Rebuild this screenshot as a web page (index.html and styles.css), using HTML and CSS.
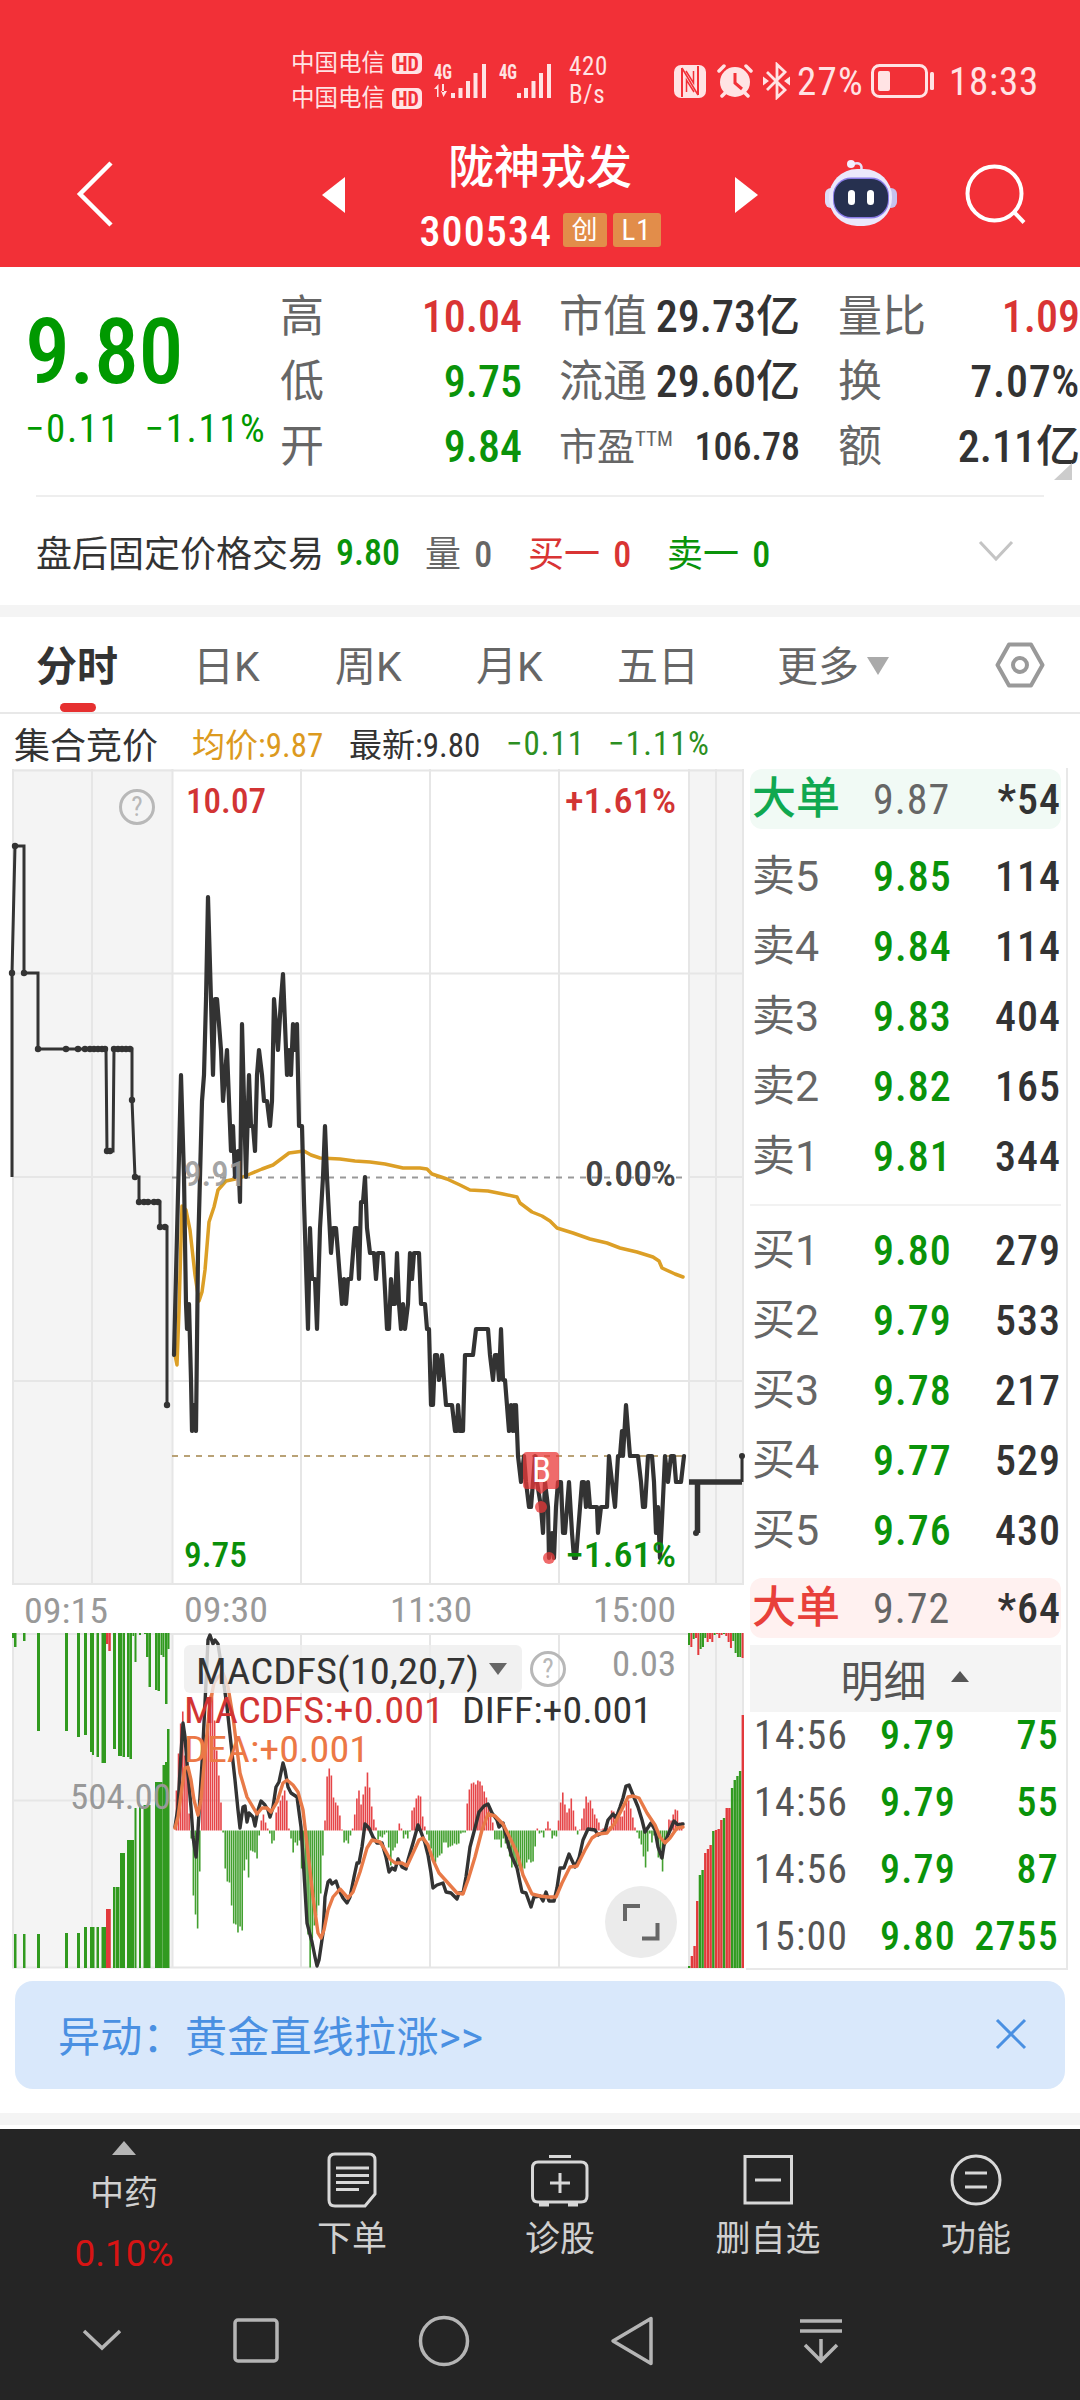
FILE: index.html
```
<!DOCTYPE html>
<html lang="zh-CN">
<head>
    <meta charset="UTF-8">
    <meta name="viewport" content="width=device-width, initial-scale=1.0">
    <title>陇神戎发 300534</title>
    <link rel="stylesheet" href="styles.css">
</head>
<body>
    <header class="header">
        <div class="status">
            <div class="carriers">
                <div class="carrier">中国电信<span class="hd">HD</span></div>
                <div class="carrier">中国电信<span class="hd">HD</span></div>
            </div>
            <svg class="signals" width="120" height="40" viewBox="0 -6 120 40">
                <g fill="#ffe3e4">
                    <text x="0" y="15" class="g4" textLength="18" lengthAdjust="spacingAndGlyphs">4G</text>
                    <path d="M3 33V25H0L4.500 20V33zM8 20V28H10V20zM7 27h6l-3.500 6z"/>
                    <path d="M17 29h4v5h-4zM24.500 24h4v10h-4zM32 17h4v17h-4zM39.500 9h4v25h-4zM48 0h4v34h-4z"/>
                    <text x="65" y="15" class="g4" textLength="18" lengthAdjust="spacingAndGlyphs">4G</text>
                    <path d="M83 29h4v5h-4zM90 24h4v10h-4zM97.500 17h4v17h-4zM105 9h4v25h-4zM113 0h4v34h-4z"/>
                </g>
            </svg>
            <div class="speed"><span>420</span><span>B/s</span></div>
            <svg class="nfc" width="32" height="33" viewBox="0 0 32 33">
                <rect x="0" y="0" width="32" height="33" rx="7" fill="#ffe3e4"/>
                <path d="M8 3V32M24 1V30" fill="none" stroke="#f23037" stroke-width="2"/>
                <path d="M8 3L24 30M12.500 27V15L20 27M12 6L19.500 18V6" fill="none" stroke="#f23037" stroke-width="1.500"/>
            </svg>
            <svg class="alarm" width="36" height="34" viewBox="0 0 36 34">
                <circle cx="18" cy="18" r="15" fill="#ffe3e4"/>
                <path d="M2 7L7 2M34 7L29 2M8 29L5 32M28 29L31 32" stroke="#ffe3e4" stroke-width="3.500" stroke-linecap="round"/>
                <path d="M18 9V19L25 25" fill="none" stroke="#f23037" stroke-width="3"/>
            </svg>
            <svg class="bt" width="27" height="38" viewBox="0 0 27 38">
                <path d="M4 10L22 28L14 35.500V2.500L22 10L4 28" fill="none" stroke="#ffe3e4" stroke-width="2.800"/>
                <path d="M0 14.500L6 19L0 23.500zM27 14.500L21 19L27 23.500z" fill="#ffe3e4"/>
            </svg>
            <span class="percent">27%</span>
            <svg class="battery" width="63" height="34" viewBox="0 0 63 34">
                <rect x="1.500" y="1.500" width="54" height="31" rx="7" fill="none" stroke="#ffe3e4" stroke-width="3"/>
                <rect x="7" y="7" width="12" height="20" rx="2" fill="#ffe3e4"/>
                <rect x="59" y="8" width="4" height="18" rx="1.500" fill="#ffe3e4"/>
            </svg>
            <span class="clock">18:33</span>
        </div>
        <div class="titlebar">
            <svg class="back" width="40" height="68" viewBox="0 0 40 68"><path d="M37 3L6 34L37 65" fill="none" stroke="#fff" stroke-width="4.500"/></svg>
            <svg class="prev" width="23" height="36" viewBox="0 0 23 36"><path d="M23 0V36L0 18z" fill="#fff"/></svg>
            <div class="stock">
                <div class="stock-name">陇神戎发</div>
                <div class="stock-code"><span class="code">300534</span><span class="tag">创</span><span class="tag l1">L1</span></div>
            </div>
            <svg class="next" width="23" height="36" viewBox="0 0 23 36"><path d="M0 0V36L23 18z" fill="#fff"/></svg>
            <svg class="robot" width="72" height="68" viewBox="0 0 72 68">
                <path d="M36 12C38 5 34 3 28 5" fill="none" stroke="#e6e2fa" stroke-width="2.500"/>
                <circle cx="26" cy="5" r="4" fill="#f4efff"/>
                <rect x="0" y="29" width="12" height="20" rx="6" fill="#dedcf6"/>
                <rect x="60" y="29" width="12" height="20" rx="6" fill="#c5c1ee"/>
                <rect x="4" y="10" width="63" height="57" rx="28" fill="#ebe8fb"/>
                <rect x="8" y="18.500" width="56" height="41" rx="18" fill="#8a7ce8"/>
                <rect x="9" y="20" width="54" height="38" rx="17" fill="#26304f"/>
                <rect x="23" y="31" width="7" height="15" rx="3.500" fill="#fff"/>
                <rect x="42" y="31" width="7" height="15" rx="3.500" fill="#fff"/>
            </svg>
            <svg class="search" width="62" height="62" viewBox="0 0 62 62"><circle cx="29.500" cy="29.500" r="27" fill="none" stroke="#fff" stroke-width="4"/><path d="M49 48L59 58.500" stroke="#fff" stroke-width="4"/></svg>
        </div>
    </header>

    <section class="quote">
        <div class="price-block">
            <div class="price">9.80</div>
            <div class="change"><span>−0.11</span><span>−1.11%</span></div>
        </div>
        <div class="facts c1">
            <div class="fact"><span>高</span><b class="up">10.04</b></div>
            <div class="fact"><span>低</span><b class="down">9.75</b></div>
            <div class="fact"><span>开</span><b class="down">9.84</b></div>
        </div>
        <div class="facts c2">
            <div class="fact"><span>市值</span><b>29.73亿</b></div>
            <div class="fact"><span>流通</span><b>29.60亿</b></div>
            <div class="fact small"><span>市盈<sup>TTM</sup></span><b>106.78</b></div>
        </div>
        <div class="facts c3">
            <div class="fact"><span>量比</span><b class="up">1.09</b></div>
            <div class="fact"><span>换</span><b class="turnover">7.07%</b></div>
            <div class="fact"><span>额</span><b>2.11亿</b></div>
        </div>
        <i class="corner"></i>
    </section>
    <section class="after-hours">
        <span class="ah-title">盘后固定价格交易</span>
        <span class="ah-price down">9.80</span>
        <span class="ah-vol">量 <b>0</b></span>
        <span class="ah-buy up">买一 <b>0</b></span>
        <span class="ah-sell down">卖一 <b>0</b></span>
        <svg class="ah-more" width="36" height="22" viewBox="0 0 36 22"><path d="M2 2L18 19L34 2" fill="none" stroke="#c4c4c4" stroke-width="3"/></svg>
    </section>

    <nav class="tabs">
        <span class="tab active">分时</span>
        <span class="tab">日K</span>
        <span class="tab">周K</span>
        <span class="tab">月K</span>
        <span class="tab">五日</span>
        <span class="tab">更多<i class="caret"></i></span>
        <svg class="gear" width="50" height="46" viewBox="0 0 50 46">
            <path d="M14 2.500H36L47.500 23L36 43.500H14L2.500 23z" fill="none" stroke="#999" stroke-width="4" stroke-linejoin="round"/>
            <circle cx="25" cy="23" r="7" fill="none" stroke="#999" stroke-width="4"/>
        </svg>
    </nav>
    <div class="summary">
        <span class="sm-title">集合竞价</span>
        <span class="sm-avg">均价:9.87</span>
        <span class="sm-last">最新:9.80</span>
        <span class="sm-chg">−0.11</span>
        <span class="sm-pct">−1.11%</span>
    </div>

    <main class="market">
        <svg class="chart" width="746" height="1202" viewBox="0 768 746 1202">
            <g class="panels">
                <path d="M12 769H172V1584H12zM689 769H744V1584H689zM12 1633H172V1968H12zM689 1633H744V1968H689z"/>
            </g>
            <g class="grid">
                <path d="M12 770.500H744M12 973.500H744M12 1381H744M12 1584H744M12 1177H172M689 1177H744"/>
                <path d="M13 769V1585M92 769V1585M172.500 769V1585M301 769V1585M430 769V1585M559 769V1585M689 769V1585M716 769V1585M743 769V1585"/>
                <path d="M12 1634H744M12 1800.500H744M12 1967.500H744"/>
                <path d="M13 1633V1968M92 1633V1968M172.500 1633V1968M301 1633V1968M430 1633V1968M559 1633V1968M689 1633V1968M716 1633V1968M743 1633V1968"/>
            </g>
            <path d="M172 1177.500H684" stroke="#999" stroke-width="2" stroke-dasharray="6 6"/>
            <path d="M172 1456H684" stroke="#b9a276" stroke-width="2" stroke-dasharray="6 6"/>

            <!-- opening auction -->
            <path class="auction" d="M12 1177V973L15 846H24V973H38V1049H106L107 1151H113L114 1049H132V1100L135 1177H139V1202H160V1227H167V1405"/>
            <g id="dots" fill="#333"></g>
            <!-- average price -->
            <polyline class="avg" points="174,1350 177,1365 179,1310 182,1206 186,1210 190,1230 195,1275 199,1301 202,1292 205,1270 209,1222 214,1207 218,1190 226,1181 240,1178 250,1174 262,1169 273,1165 281,1159 289,1153 304,1151 311,1155 320,1158 340,1159 355,1161 370,1162 385,1164 403,1168 420,1168 427,1169 432,1174 447,1179 460,1185 470,1190 488,1191 503,1194 517,1197 520,1203 532,1212 542,1216 550,1221 557,1228 573,1233 590,1239 607,1243 620,1248 637,1252 653,1257 659,1261 662,1268 675,1274 683,1277"/>
            <polyline class="last" points="174,1355 181,1075 184,1177 186,1304 187,1329 189,1304 191,1380 192,1431 194,1405 196,1431 198,1253 200,1177 202,1101 204,1075 206,1000 208,897 211,1000 213,1075 215,999 217,999 219,1024 221,1050 223,1101 225,1075 227,1050 229,1101 231,1151 233,1126 235,1177 238,1151 240,1202 242,1024 244,1101 246,1177 249,1075 251,1126 253,1126 255,1151 257,1075 259,1050 262,1075 264,1101 267,1101 270,1126 272,1101 274,999 276,1024 278,1050 281,999 283,974 285,1024 287,1075 289,1050 291,1075 293,1024 295,1050 297,1024 299,1126 302,1126 304,1202 308,1329 310,1228 312,1279 315,1279 317,1329 320,1228 323,1177 325,1126 327,1177 331,1253 333,1228 336,1228 338,1253 340,1279 342,1304 344,1279 346,1304 348,1279 351,1279 353,1253 355,1228 357,1228 359,1279 361,1202 363,1202 365,1177 367,1228 370,1253 374,1253 376,1279 378,1253 383,1253 385,1290 387,1329 389,1329 391,1279 393,1304 395,1304 397,1253 399,1304 401,1329 403,1304 405,1329 408,1304 410,1253 412,1279 414,1253 419,1253 421,1304 425,1304 427,1329 429,1329 431,1405 433,1405 435,1355 437,1355 439,1380 442,1355 446,1405 452,1405 455,1431 457,1431 458,1405 460,1431 463,1431 465,1355 473,1355 476,1329 488,1329 490,1355 493,1380 495,1355 497,1355 499,1380 501,1329 503,1380 505,1380 509,1431 511,1405 513,1431 514,1405 515,1431 516,1405 518,1456 521,1482 524,1456 526,1482 529,1507 531,1507 533,1482 535,1456 537,1482 541,1507 543,1533 545,1482 548,1507 549,1558 552,1533 554,1558 556,1507 558,1482 561,1482 563,1533 565,1533 569,1482 572,1533 574,1558 576,1558 579,1520 582,1482 584,1482 586,1507 588,1482 590,1507 597,1507 598,1533 601,1507 607,1507 609,1456 612,1482 615,1507 618,1456 620,1456 622,1431 623,1456 626,1405 628,1431 630,1456 638,1456 641,1482 643,1507 645,1507 648,1456 652,1456 654,1482 656,1533 658,1507 660,1558 662,1520 665,1456 668,1482 671,1456 674,1456 676,1482 681,1482 684,1456"/>
            <!-- after-hours auction -->
            <path d="M689 1482H742M697.500 1482V1533" stroke="#333" stroke-width="5.500" fill="none"/>
            <path d="M742 1482V1456" stroke="#333" stroke-width="3"/>
            <circle cx="696" cy="1533" r="3" fill="#333"/><circle cx="742" cy="1456" r="3" fill="#333"/>

            <g fill="#e93a3a" fill-opacity=".75">
                <path d="M527 1452H555Q559 1452 559 1456V1485Q559 1489 555 1489H547L541 1494L535 1489H527Q523 1489 523 1485V1456Q523 1452 527 1452z"/>
                <circle cx="541" cy="1507" r="6"/><circle cx="549" cy="1558" r="6"/>
            </g>
            <text x="532" y="1482" class="t" font-size="31" fill="#fff" textLength="19" lengthAdjust="spacingAndGlyphs">B</text>

            <circle cx="137" cy="807" r="16.500" fill="none" stroke="#b8b8b8" stroke-width="3"/>
            <text x="137" y="816" class="q">?</text>
            <text x="186" y="813" class="t m" fill="#d23434" textLength="80" lengthAdjust="spacingAndGlyphs">10.07</text>
            <text x="565" y="813" class="t m" fill="#d23434" textLength="111" lengthAdjust="spacingAndGlyphs">+1.61%</text>
            <text x="184" y="1186" class="t m" fill="#999" fill-opacity=".9" textLength="62" lengthAdjust="spacingAndGlyphs">9.91</text>
            <text x="585" y="1186" class="t m" fill="#444" textLength="91" lengthAdjust="spacingAndGlyphs">0.00%</text>
            <text x="184" y="1567" class="t m" fill="#0a8f0a" textLength="63" lengthAdjust="spacingAndGlyphs">9.75</text>
            <text x="565" y="1567" class="t m" fill="#0a8f0a" textLength="111" lengthAdjust="spacingAndGlyphs">−1.61%</text>
            <g class="t" fill="#999">
                <text x="24" y="1623" textLength="84" lengthAdjust="spacingAndGlyphs">09:15</text>
                <text x="184" y="1622" textLength="84" lengthAdjust="spacingAndGlyphs">09:30</text>
                <text x="390" y="1622" textLength="82" lengthAdjust="spacingAndGlyphs">11:30</text>
                <text x="593" y="1622" textLength="83" lengthAdjust="spacingAndGlyphs">15:00</text>
            </g>

            <!-- indicator panel -->
            <g id="bars"></g>
            <polyline class="diff" points="175,1827 178,1807 181,1753 183,1723 185,1737 187,1763 191,1807 193,1837 196,1857 198,1830 202,1763 205,1703 208,1640 210,1635 213,1644 215,1640 218,1644 222,1670 227,1707 232,1753 235,1780 238,1810 240,1828 243,1807 245,1806 247,1822 249,1813 253,1817 255,1826 258,1810 261,1801 265,1805 268,1810 270,1817 273,1807 276,1787 279,1782 283,1763 285,1770 288,1787 291,1793 297,1797 301,1827 304,1873 307,1923 312,1942 315,1957 317,1966 319,1960 323,1933 325,1897 328,1882 330,1880 332,1884 336,1881 339,1890 343,1898 347,1903 350,1897 354,1877 357,1863 359,1863 362,1847 365,1824 369,1828 373,1837 377,1843 382,1843 386,1857 389,1872 392,1868 395,1870 398,1859 402,1867 406,1869 408,1860 413,1843 418,1825 421,1832 425,1843 428,1855 431,1873 433,1888 437,1885 443,1883 446,1892 451,1893 457,1899 459,1893 463,1893 466,1877 470,1847 475,1828 479,1812 484,1806 488,1804 492,1813 497,1820 499,1827 503,1823 507,1840 512,1857 517,1868 522,1892 526,1893 531,1907 534,1897 540,1896 543,1901 546,1892 549,1901 554,1901 557,1888 560,1868 564,1868 569,1854 575,1867 579,1858 583,1840 588,1829 595,1830 598,1835 605,1831 608,1820 613,1814 616,1818 620,1807 623,1798 626,1786 629,1785 633,1795 638,1807 642,1820 645,1832 651,1823 655,1830 658,1847 662,1858 664,1845 668,1835 674,1821 678,1825 683,1824"/>
            <polyline class="dea" points="175,1828 178,1817 182,1787 185,1768 188,1767 191,1780 194,1800 198,1815 201,1800 205,1753 210,1703 214,1683 218,1677 223,1673 228,1687 233,1717 240,1773 247,1797 257,1814 262,1808 267,1808 271,1812 277,1802 283,1783 287,1780 293,1785 298,1792 303,1810 308,1853 313,1897 318,1933 321,1938 324,1930 328,1910 333,1897 340,1889 348,1898 353,1892 360,1872 367,1848 372,1840 380,1842 385,1850 390,1859 395,1863 402,1863 407,1866 413,1853 419,1840 423,1838 428,1845 433,1860 439,1873 448,1883 457,1893 463,1894 468,1880 475,1857 482,1830 488,1814 495,1816 503,1824 510,1838 517,1853 523,1875 532,1894 540,1896 548,1897 556,1897 562,1883 570,1867 577,1866 585,1850 592,1838 598,1834 607,1833 615,1823 623,1807 628,1797 633,1796 639,1798 647,1813 655,1825 660,1837 665,1843 670,1838 677,1828 683,1827"/>
            <rect x="184" y="1645" width="338" height="48" rx="6" fill="#eee" fill-opacity=".8"/>
            <text x="196" y="1684" class="t m2" fill="#333" textLength="283" lengthAdjust="spacingAndGlyphs">MACDFS(10,20,7)</text>
            <path d="M489 1663H507L498 1675z" fill="#666"/>
            <circle cx="548" cy="1669" r="16.500" fill="none" stroke="#b8b8b8" stroke-width="3"/>
            <text x="548" y="1678" class="q">?</text>
            <text x="612" y="1676" class="t" fill="#999" textLength="64" lengthAdjust="spacingAndGlyphs">0.03</text>
            <text x="184" y="1723" class="t m2" fill="#d23434" textLength="260" lengthAdjust="spacingAndGlyphs">MACDFS:+0.001</text>
            <text x="462" y="1723" class="t m2" fill="#333" textLength="190" lengthAdjust="spacingAndGlyphs">DIFF:+0.001</text>
            <text x="184" y="1762" class="t m2" fill="#ec7846" textLength="185" lengthAdjust="spacingAndGlyphs">DEA:+0.001</text>
            <text x="70" y="1809" class="t" fill="#999" textLength="101" lengthAdjust="spacingAndGlyphs">504.00</text>
            <circle cx="641" cy="1922" r="36" fill="#ebebeb"/>
            <path d="M625 1921V1906H640M642 1938.500H657.500V1923" fill="none" stroke="#666" stroke-width="4"/>
        </svg>

        <aside class="book">
            <div class="order big sell-big"><span>大单</span><b>9.87</b><em>*54</em></div>
            <div class="orders">
                <div class="order"><span>卖5</span><b>9.85</b><em>114</em></div>
                <div class="order"><span>卖4</span><b>9.84</b><em>114</em></div>
                <div class="order"><span>卖3</span><b>9.83</b><em>404</em></div>
                <div class="order"><span>卖2</span><b>9.82</b><em>165</em></div>
                <div class="order"><span>卖1</span><b>9.81</b><em>344</em></div>
            </div>
            <div class="orders buys">
                <div class="order"><span>买1</span><b>9.80</b><em>279</em></div>
                <div class="order"><span>买2</span><b>9.79</b><em>533</em></div>
                <div class="order"><span>买3</span><b>9.78</b><em>217</em></div>
                <div class="order"><span>买4</span><b>9.77</b><em>529</em></div>
                <div class="order"><span>买5</span><b>9.76</b><em>430</em></div>
            </div>
            <div class="order big buy-big"><span>大单</span><b>9.72</b><em>*64</em></div>
            <div class="detail-head">明细<i></i></div>
            <div class="trades">
                <div class="trade"><span>14:56</span><b>9.79</b><em>75</em></div>
                <div class="trade"><span>14:56</span><b>9.79</b><em>55</em></div>
                <div class="trade"><span>14:56</span><b>9.79</b><em>87</em></div>
                <div class="trade"><span>15:00</span><b>9.80</b><em>2755</em></div>
            </div>
        </aside>
    </main>

    <div class="notice">
        <span>异动：黄金直线拉涨&gt;&gt;</span>
        <svg width="32" height="32" viewBox="0 0 32 32"><path d="M2 2L30 30M30 2L2 30" stroke="#4a90e2" stroke-width="3"/></svg>
    </div>
    <div class="band"></div>

    <footer class="footer">
        <div class="actions">
            <div class="sector"><i></i><span>中药</span><b>0.10%</b></div>
            <div class="action">
                <svg width="60" height="60" viewBox="0 0 60 60"><path d="M13 4H47Q53 4 53 10V44L43 56H13Q7 56 7 50V10Q7 4 13 4zM14 18H47M14 25.500H47M14 32.500H47M14 39.500H37" fill="none" stroke="#d8d8d8" stroke-width="3"/></svg>
                <span>下单</span>
            </div>
            <div class="action">
                <svg width="60" height="60" viewBox="0 0 60 60"><path d="M8 12H51Q57 12 57 18V46Q57 52 51 52H8Q2.500 52 2.500 46V18Q2.500 12 8 12zM19 6.500H41M30 23V43M20 33H40M9 55H19M38 55H48" fill="none" stroke="#d8d8d8" stroke-width="3"/></svg>
                <span>诊股</span>
            </div>
            <div class="action">
                <svg width="60" height="60" viewBox="0 0 60 60"><path d="M7 6.500H53.500V53H7zM17 30H43" fill="none" stroke="#d8d8d8" stroke-width="3"/></svg>
                <span>删自选</span>
            </div>
            <div class="action">
                <svg width="60" height="60" viewBox="0 0 60 60"><circle cx="30" cy="30" r="24" fill="none" stroke="#d8d8d8" stroke-width="3"/><path d="M19 23H41M19 37H41" stroke="#d8d8d8" stroke-width="3"/></svg>
                <span>功能</span>
            </div>
        </div>
        <svg class="sysnav" width="1080" height="60" viewBox="0 0 1080 60">
            <g fill="none" stroke="#b5b5b5" stroke-width="3.500">
                <path d="M84 21L102 38L120 21"/>
                <rect x="235" y="10" width="42" height="41" rx="3"/>
                <circle cx="444" cy="31" r="23.500"/>
                <path d="M651 8.500V53.500L613 31z" stroke-linejoin="round"/>
                <path d="M800 11H842M800 21H842M821 29V50M805 35L821 51L837 35"/>
            </g>
        </svg>
    </footer>

    <script>
        const RED = "#e2393c";
        const GREEN = "#319a1f";

        function add(id, html) {
            document.getElementById(id).innerHTML += html;
        }
        function bar(x, y, w, h, color) {
            return `<rect x="${x}" y="${y}" width="${w}" height="${h}" fill="${color}"/>`;
        }

        // auction match points
        [[12,973],[15,846],[24,973],[38,1049],[66,1049],[78,1049],[85,1049],[90,1049],[94,1049],[98,1049],[102,1049],[105,1049],
         [107,1151],[110,1151],[114,1049],[118,1049],[122,1049],[126,1049],[130,1049],[132,1100],[135,1177],[139,1202],[144,1202],
         [148,1202],[154,1202],[158,1202],[160,1227],[165,1227],[167,1405]]
            .forEach(([x, y]) => add("dots", `<circle cx="${x}" cy="${y}" r="3.2"/>`));

        // MACD histogram, one value per minute
        const macd = [40,77,107,119,75,60,17,-8,-65,-84,-98,-41,40,70,95,115,135,140,110,80,55,28,-2,-38,-51,-52,-75,-93,-94,-102,-96,
            -100,-40,-29,-47,-20,-21,-22,-28,-5,10,16,8,2,-3,-13,-10,18,24,30,35,40,30,2,-8,-22,-12,-15,-10,-38,-52,-73,-104,-137,-108,
            -95,-85,-75,-63,-25,10,54,62,55,33,28,25,15,1,-12,-10,-13,-5,2,16,32,40,26,36,44,58,43,24,11,3,-9,-6,-7,-4,-2,-17,-35,-20,
            -17,-13,7,2,-8,-4,-8,-1,20,23,32,35,34,14,4,-4,-10,-18,-30,-32,-27,-25,-23,-12,-12,-17,-16,-15,-13,-14,-13,-3,-2,-2,27,41,
            47,48,46,50,49,45,39,33,26,19,8,-9,-9,-9,-17,-8,-13,-18,-26,-37,-30,-35,-36,-40,-42,-38,-32,-29,-32,-31,-16,2,-3,-2,-7,2,9,
            2,-8,-5,-6,10,28,38,26,18,22,32,20,4,-4,1,12,22,34,28,30,22,16,12,8,1,2,2,3,4,20,19,16,15,14,14,20,28,30,22,13,3,-2,-8,-14,
            -26,-37,-21,-3,-12,-5,-8,-27,-28,-41,-15,-5,11,10,16,21,20,8,8];
        let out = "";
        macd.forEach((v, i) => {
            const x = (175.6 + i * 2.123).toFixed(2);
            out += v > 0 ? bar(x, 1830.5 - v, 1.6, v, "#e64548") : bar(x, 1830.5, 1.6, -v, "#43a030");
        });

        // opening auction, unmatched volume hangs from the top: x, width, length
        [[12,2,5],[14,2.5,14],[23,2.5,8],[37,3,98],[65,3,98],[77,3,104],[84,3,102],[90,2.5,119],[92,2,122],[96.5,2.5,124],[101.5,4.5,130],
         [113,3,116],[118,4,123],[122.5,2.5,124],[127,2.5,124],[129.5,2.5,126],[132.5,1.5,3],[134.5,2,29],[139,2,2],[144,2,1],
         [146,2.5,24],[148.5,2.5,54],[155,2.5,57],[157.5,2.5,58],[160.5,2,22],[162.5,2,24],[165,2.5,71],[167.5,2,16]]
            .forEach(([x, w, h]) => out += bar(x, 1633, w, h, GREEN));
        out += bar(106, 1633, 2.3, 11, RED) + bar(108.3, 1633, 2.5, 18, RED);
        // matched volume stands on the bottom
        [[14,2.5,34],[23,2.5,34],[37,3,34],[65,3,35],[77,3,35],[84,3,41],[90,4.5,41],[96.5,2.5,41],[101.5,4.5,41],[113,2.5,81],
         [116,3.5,81],[120,5,115],[127,7,128],[134.5,2,160],[139,2,162],[143.5,7,163],[155,7.5,186],[162.5,2.5,203],
         [165,2,206],[167,2.5,239]]
            .forEach(([x, w, h]) => out += bar(x, 1968 - h, w, h, GREEN));
        out += bar(106, 1909, 4.8, 59, RED);

        // closing auction
        const unmatched = [[12,0],[14,1],[6,0],[5,1],[22,1],[16,0],[14,0],[5,0],[9,1],[6,1],[9,1],[2,0],[1,1],[5,1],[2,1],[1,0],[3,1],[9,1],[15,1],[8,0],[20,0],[24,0],[24,0],[25,1]];
        unmatched.forEach(([h, up], i) => out += bar(688 + i * 2.33, 1633, 2, h, up ? RED : GREEN));
        const matched = [[2,0],[12,1],[22,1],[67,1],[93,0],[98,0],[115,1],[119,1],[123,1],[137,0],[138,1],[139,1],[148,1],[150,0],[160,1],[160,1],[180,0],[188,0],[192,0],[197,0],[253,1]];
        matched.forEach(([h, up], i) => out += bar(688 + i * 2.68, 1968 - h, 2.4, h, up ? RED : GREEN));
        add("bars", out);
    </script>
</body>
</html>
```
FILE: styles.css
```
* {
    box-sizing: border-box;
}
body {
    margin: 0;
    width: 1080px;
    height: 2400px;
    overflow: hidden;
    background: #fff;
    color: #333;
    font-family: Roboto, "Noto Sans CJK SC", sans-serif;
    font-stretch: 85%;
}
b, em, i {
    font-style: normal;
    font-weight: 500;
}
.up { color: #d93434; }
.down { color: #0a930a; }

/* header */
.header {
    height: 267px;
    background: #f23037;
    color: #fff;
}
.status {
    display: flex;
    align-items: center;
    height: 112px;
    padding: 50px 0 0 291px;
    color: #ffe3e4;
}
.carriers {
    width: 143px;
}
.carrier {
    display: flex;
    align-items: center;
    gap: 7px;
    height: 35px;
    font-size: 23.5px;
    line-height: 35px;
}
.hd {
    width: 30px;
    height: 21px;
    border-radius: 5px;
    background: #ffe3e4;
    color: #f23037;
    font-size: 20px;
    font-weight: 700;
    line-height: 22px;
    text-align: center;
}
.signals { margin-top: -6px; }
.g4 {
    font-size: 20px;
    font-weight: 700;
}
.speed {
    display: flex;
    flex-direction: column;
    width: 54px;
    margin-left: 15px;
    font-size: 25px;
    line-height: 28px;
    letter-spacing: 0.7px;
}
.nfc { margin-left: 51px; }
.alarm { margin-left: 11px; }
.bt { margin-left: 10px; }
.percent {
    width: 67px;
    margin: 2px 0 0 7px;
    font-size: 39px;
    letter-spacing: 1.2px;
}
.battery { margin-left: 7px; }
.clock {
    margin: 2px 0 0 15px;
    font-size: 39px;
    letter-spacing: 0.8px;
}
.titlebar {
    display: flex;
    align-items: center;
    height: 155px;
    padding-left: 74px;
}
.back { margin-top: 8px; }
.prev { margin: 10px 0 0 208px; }
.stock {
    width: 390px;
    padding-top: 20px;
    text-align: center;
}
.stock-name {
    height: 61px;
    font-size: 46px;
    font-weight: 500;
    line-height: 56px;
}
.stock-code {
    display: flex;
    justify-content: center;
    align-items: center;
    height: 60px;
    gap: 6px;
}
.code {
    width: 137px;
    padding-top: 2px;
    font-size: 42px;
    font-weight: 500;
    letter-spacing: 1.1px;
    text-align: left;
}
.tag {
    width: 44px;
    height: 34px;
    border-radius: 3px;
    background: #e28d4a;
    font-size: 26px;
    line-height: 34px;
}
.l1 {
    width: 48px;
    font-size: 29px;
    letter-spacing: 1px;
}
.next { margin-top: 10px; }
.robot { margin: 6px 0 0 67px; }
.search { margin: 10px 0 0 68px; }

/* quote */
.quote {
    position: relative;
    display: flex;
    height: 228px;
    padding: 18px 0 0 25px;
}
.price-block {
    width: 255px;
    color: #090;
}
.price {
    height: 104px;
    padding-top: 16px;
    font-size: 90px;
    font-weight: 500;
    letter-spacing: -0.5px;
    line-height: 104px;
}
.change {
    display: flex;
    gap: 24px;
    height: 60px;
    font-size: 39px;
    letter-spacing: 1.6px;
    line-height: 80px;
}
.fact {
    display: flex;
    justify-content: space-between;
    height: 65px;
    font-size: 44px;
    line-height: 65px;
    white-space: nowrap;
}
.fact span { color: #666; }
.c1 { width: 242px; }
.c2 { width: 241px; margin-left: 37px; }
.c3 { width: 242px; margin-left: 38px; }
.turnover { letter-spacing: 0.7px; }
.fact.small { font-size: 38px; }
.fact sup {
    font-size: 21px;
    line-height: 0;
}
.corner {
    position: absolute;
    right: 8px;
    bottom: 15px;
    border-left: 18px solid transparent;
    border-bottom: 17px solid #ccc;
}
.after-hours {
    display: flex;
    align-items: center;
    height: 110px;
    margin: 0 36px;
    border-top: 2px solid #eee;
    font-size: 36px;
    white-space: nowrap;
}
.ah-title { width: 300px; }
.ah-price {
    width: 89px;
    padding-top: 4px;
    font-weight: 500;
}
.ah-vol { width: 103px; color: #666; }
.ah-buy { width: 139px; }
.ah-sell { width: 311px; }
.after-hours span { word-spacing: 5px; }

/* tabs */
.tabs {
    display: flex;
    align-items: center;
    height: 109px;
    padding-left: 36px;
    border-top: 12px solid #f4f4f4;
    border-bottom: 2px solid #e8e8e8;
    color: #666;
    font-size: 41px;
    font-stretch: 100%;
}
.tab {
    position: relative;
    width: 141px;
    height: 95px;
    line-height: 101px;
    white-space: nowrap;
}
.tab:nth-child(1) { width: 157px; }
.tab:nth-child(2) { width: 142px; }
.tab:nth-child(6) { width: 218px; margin-left: 19px; }
.active {
    color: #333;
    font-weight: 700;
}
.active::after {
    content: "";
    position: absolute;
    left: 24px;
    bottom: 0;
    width: 36px;
    height: 9px;
    border-radius: 5px;
    background: #e63030;
}
.caret {
    display: inline-block;
    margin: 0 0 6px 8px;
    border: 11px solid transparent;
    border-top: 18px solid #aaa;
    border-bottom: 0;
}
.summary {
    display: flex;
    align-items: center;
    height: 54px;
    padding: 3px 0 0 14px;
    font-size: 33px;
    white-space: nowrap;
}
.sm-title { width: 178px; font-size: 36px; }
.sm-avg { width: 157px; color: #dc9a1e; }
.sm-last { width: 157px; }
.sm-chg {
    width: 102px;
    padding-top: 2px;
    color: #2c8f22;
    letter-spacing: 1px;
}
.sm-pct {
    padding-top: 2px;
    color: #2c8f22;
    letter-spacing: 1.2px;
}

/* charts */
.market {
    display: flex;
    height: 1202px;
}
.chart {
    flex: none;
}
.panels { fill: #f4f4f4; }
.grid {
    fill: none;
    stroke: #e6e6e6;
    stroke-width: 2;
}
.auction {
    fill: none;
    stroke: #333;
    stroke-width: 3;
}
.avg, .last, .diff, .dea {
    fill: none;
    stroke-width: 3.5;
    stroke-linejoin: round;
    stroke-linecap: round;
}
.avg { stroke: #dc9f26; }
.last { stroke: #333; stroke-width: 4.2; }
.diff { stroke: #333; stroke-width: 3.4; }
.dea { stroke: #e87a48; stroke-width: 3.4; }
.t { font-size: 35px; }
.m { font-weight: 500; }
.m2 { font-size: 37px; }
.q {
    font-size: 27px;
    fill: #b8b8b8;
    text-anchor: middle;
}

/* order book */
.book {
    flex: none;
    width: 322px;
    padding: 1px 5px 0 4px;
    border-right: 2px solid #e8e8e8;
    border-bottom: 2px solid #e8e8e8;
}
.order {
    display: flex;
    height: 70px;
    padding-left: 2px;
    font-size: 42px;
    line-height: 73px;
    letter-spacing: 1px;
}
.order span {
    width: 121px;
    color: #666;
    font-size: 43px;
    font-stretch: 100%;
    letter-spacing: 0;
}
.order b { color: #0a930a; }
.order em, .trade em {
    flex: 1;
    text-align: right;
    color: #333;
}
.big {
    height: 60px;
    border-radius: 12px;
    line-height: 61px;
}
.order.big b { color: #666; font-weight: 400; }
.order.big span { font-size: 44px; font-weight: 500; }
.sell-big { background: #f1faf5; }
.buy-big { background: #fff1f0; }
.order.sell-big span { color: #10a850; }
.order.buy-big span { color: #e8403a; }
.orders {
    height: 375px;
    padding-top: 11px;
}
.buys {
    height: 374px;
    padding-top: 8px;
    border-top: 2px solid #f2f2f2;
}
.detail-head {
    display: flex;
    justify-content: center;
    align-items: center;
    gap: 24px;
    height: 67px;
    margin-top: 7px;
    padding-bottom: 2px;
    padding-right: 2px;
    background: #f4f4f4;
    color: #555;
    font-size: 43px;
}
.detail-head i {
    margin-top: -3px;
    border: 9px solid transparent;
    border-bottom: 11px solid #555;
    border-top: 0;
}
.trades {
    margin-top: -10px;
}
.trade {
    display: flex;
    height: 67px;
    padding: 0 2px 0 4px;
    font-size: 40px;
    letter-spacing: 1.2px;
    line-height: 68px;
}
.trade span { width: 126px; color: #555; }
.trade b, .trade em { color: #0a930a; }

.notice {
    display: flex;
    justify-content: space-between;
    align-items: center;
    width: 1050px;
    height: 108px;
    margin: 11px 15px 0;
    padding: 0 38px 3px 43px;
    border-radius: 18px;
    background: #d9e8fb;
    color: #4a90e2;
    font-size: 42px;
    font-stretch: 100%;
}
.notice span { letter-spacing: 0.3px; }
.band {
    height: 12px;
    margin: 24px 0 4px;
    background: #f4f4f4;
}

/* footer */
.footer {
    height: 271px;
    background: #252525;
    color: #d0d0d0;
}
.actions {
    display: flex;
    height: 181px;
    padding-left: 20px;
}
.sector, .action {
    display: flex;
    flex-direction: column;
    align-items: center;
    width: 208px;
}
.sector {
    margin-right: 20px;
    padding-top: 12px;
}
.sector i {
    border: 12px solid transparent;
    border-bottom: 14px solid #b5b5b5;
    border-top: 0;
}
.sector span {
    height: 62px;
    font-size: 34px;
    line-height: 76px;
}
.sector b {
    color: #d81414;
    font-size: 37px;
    font-stretch: 100%;
    font-weight: 400;
    line-height: 74px;
}
.action svg { margin-top: 21px; }
.action span {
    font-size: 35px;
    line-height: 60px;
}
.sysnav { display: block; }
```
